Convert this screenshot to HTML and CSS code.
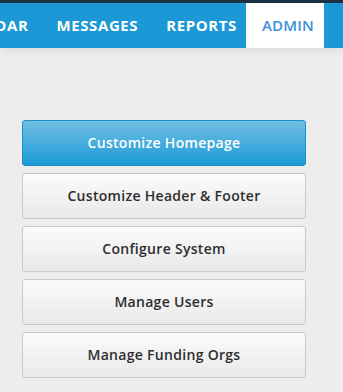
FILE: index.html
```html
<!DOCTYPE html>
<html>
<head>
    <meta charset="UTF-8">
    <title>Admin</title>
    <link rel="stylesheet" href="styles.css">
</head>
<body>
    <div class="topline"></div>
    <nav class="menu">
        <span class="item">CALENDAR</span>
        <span class="item">MESSAGES</span>
        <span class="item">REPORTS</span>
        <span class="item active">ADMIN</span>
    </nav>

    <main class="admin">
        <a class="btn primary">Customize Homepage</a>
        <a class="btn">Customize Header &amp; Footer</a>
        <a class="btn">Configure System</a>
        <a class="btn">Manage Users</a>
        <a class="btn">Manage Funding Orgs</a>
    </main>
</body>
</html>
```

FILE: styles.css
```css
body{
    margin:0px;
    background-color:#ededed;
    font-family:"Open Sans", "Noto Sans", sans-serif;
    overflow:hidden;
}
.topline{
    height:3px;background-color:#1b3242;
}
.menu{
    display:flex;justify-content:flex-end;
    height:45px;
    padding-right:19px;
    background-color:#1b98d5;
    box-shadow:0 2px 10px rgba(0,0,0,0.08);
    overflow:hidden;
    position:relative;
}
.item{
    flex:none;
    padding:0px 14px;
    line-height:44px;
    font-size:15px;font-weight:700;
    letter-spacing:0.6px;
    color:#fff;
}
.item.active{
    margin-left:-5px;
    padding:0px 10px 0px 16px;
    background-color:#fff;
    color:#3b91d9;
    font-weight:600;
    letter-spacing:0.2px;
}

.admin{
    display:flex;flex-direction:column;gap:7px;
    width:284px;
    padding-top:72px;
    margin-left:22px;
}
.btn{
    display:block;
    height:44px;line-height:44px;
    text-align:center;
    font-size:14px;font-weight:600;
    letter-spacing:0.3px;
    color:#2e2e2e;
    border:1px solid #c9c9c9;border-radius:3px;
    background:linear-gradient(#fbfbfb, #e9e9e9);
}
.btn.primary{
    color:#fff;
    border-color:#1990cd;
    background:linear-gradient(#71bfe2, #1b9ad7);
}
```
